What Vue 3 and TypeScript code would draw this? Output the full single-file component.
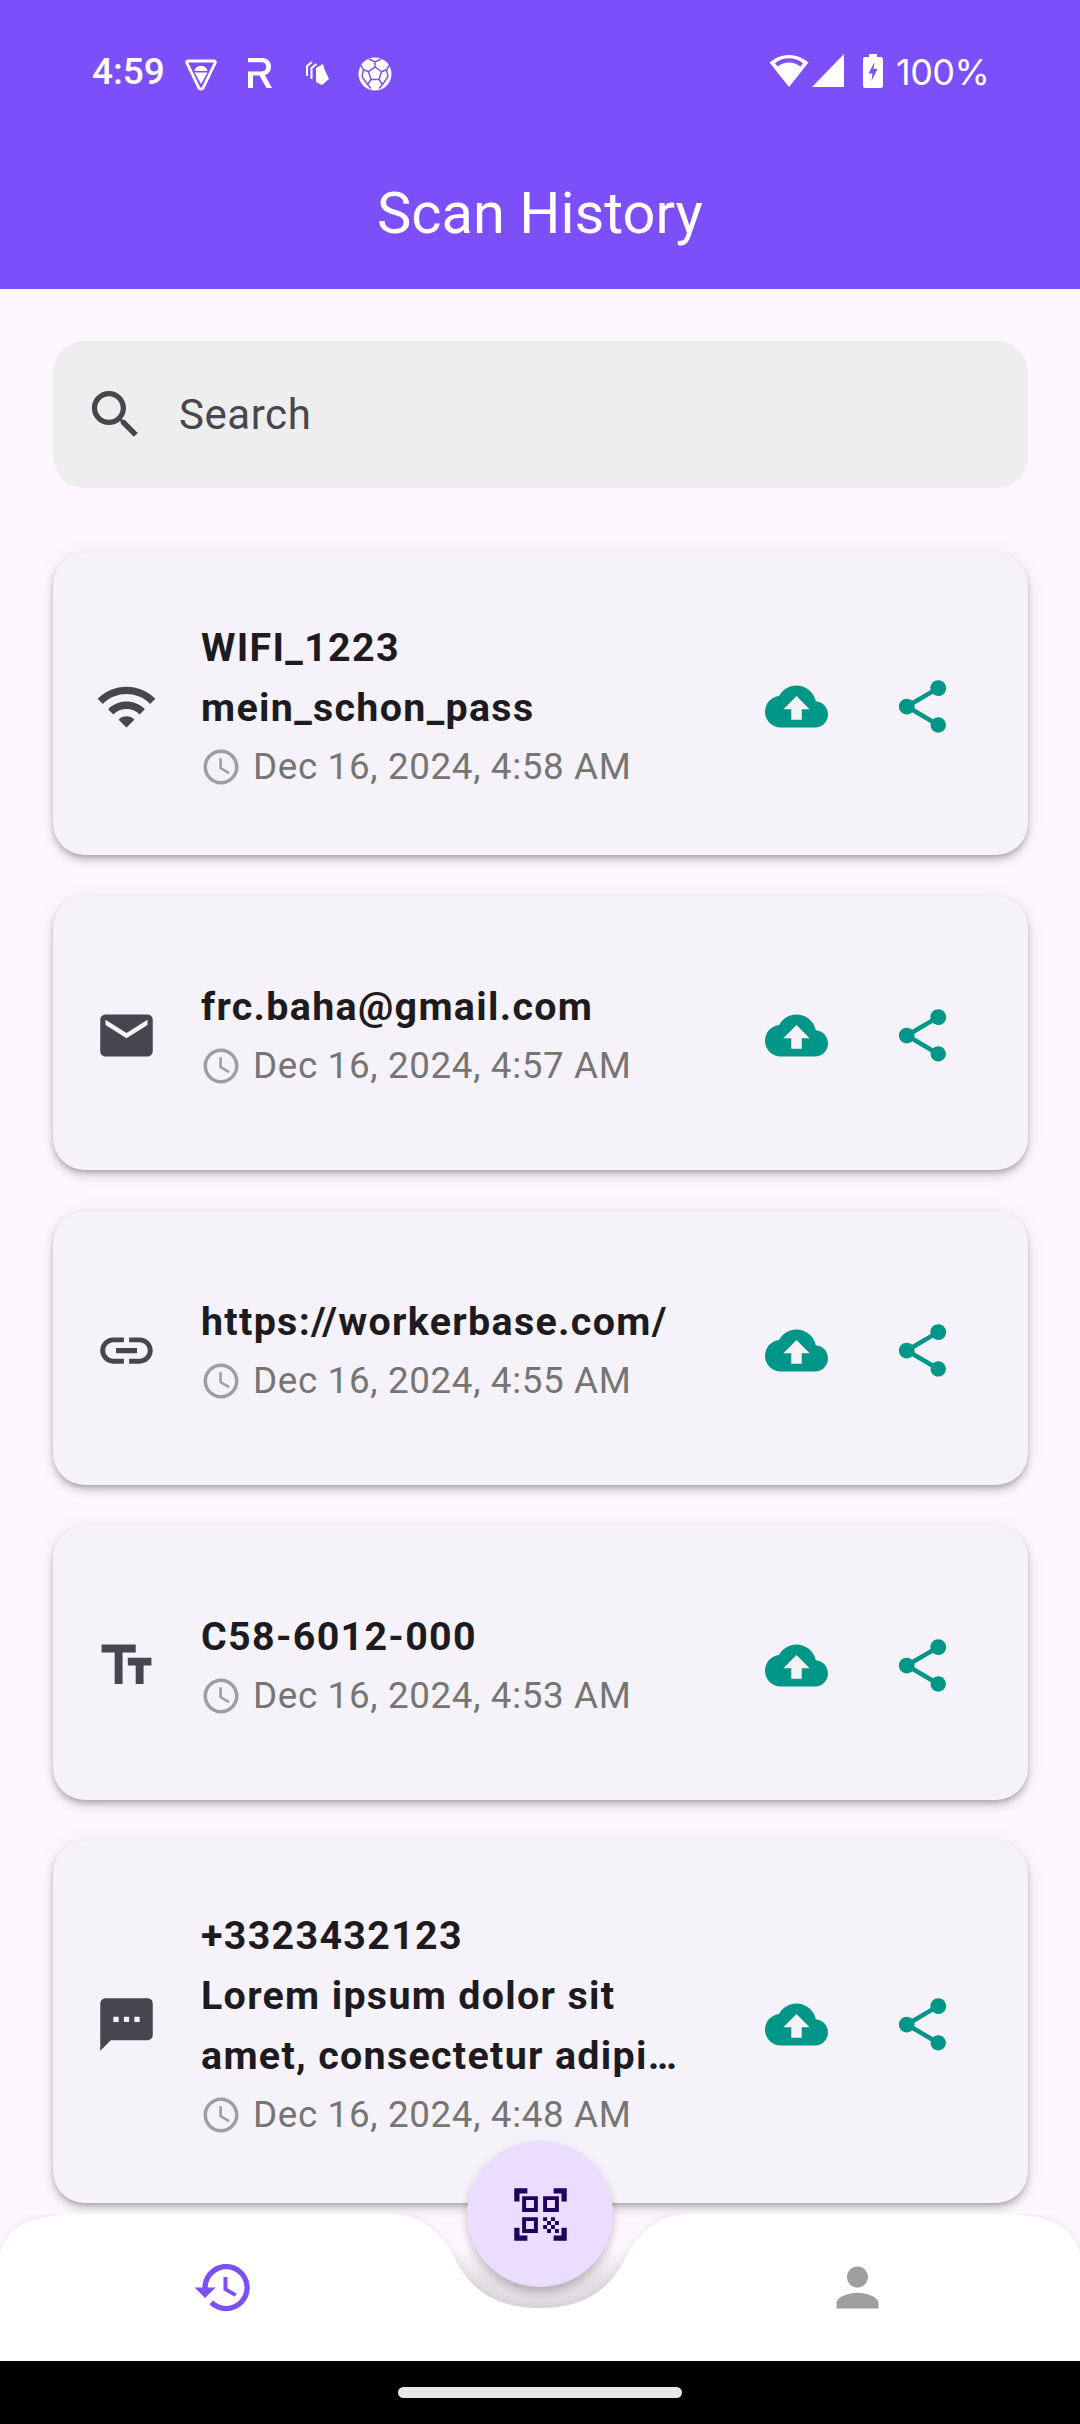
<template>
  <div class="screen">
    <header class="top">
      <div class="status">
        <span class="clock">4:59</span>
        <svg class="st st-vpn" width="32" height="32" viewBox="0 0 32 32">
          <path d="M3 2h26c1 0 1.600.9 1.200 1.800L18 29c-.8 1.400-3.200 1.400-4 0L1.800 3.800C1.400 2.900 2 2 3 2z" fill="none" stroke="#fff" stroke-width="2.800" />
          <path d="M9.500 12c.4-3 3-5 6.500-5s6.100 2 6.500 5zM9.500 13.500h13L16 25z" fill="#fff" />
        </svg>
        <svg class="st st-r" width="24" height="30" viewBox="0 0 24 30">
          <path d="M0 0h14c5.500 0 9 3.500 9 8.700 0 4.200-2.500 7.300-6.200 8.300L24 30h-5.500l-7-12.500H5V30H0V13.500h13.500c3 0 4.700-1.900 4.700-4.700S16.500 4.300 13.500 4.300H0z" fill="#fff" />
        </svg>
        <svg class="st st-stack" width="24" height="26" viewBox="0 0 24 26">
          <path d="M1 16V6l5-4M5.500 19V8l5-4" fill="none" stroke="#fff" stroke-width="2" />
          <path d="M10 8l7-4 1.500 5.500L23 19l-7 6-6-3z" fill="#fff" />
        </svg>
        <svg class="st st-ball" width="34" height="34" viewBox="0 0 34 34">
          <circle cx="17" cy="17" r="16.500" fill="#fff" />
          <path d="M17 10l6.500 4.700-2.500 7.800h-8l-2.500-7.800zM17 10V5M23.500 14.700l5-2M21 22.500l3.500 5M13 22.500l-3.500 5M10.500 14.700l-5-2M11 2l6 3 6-3M28.500 12.700L32 7.500M28.500 12.700l1.500 7-5.500 7.800-3.500 4M5.500 12.700L2 7.500M5.500 12.700L4 19.700l5.500 7.800 3.500 4" fill="none" stroke="#7c4ff8" stroke-width="1.500" />
        </svg>
        <span class="status-gap"></span>
        <svg class="st" width="40" height="33" viewBox="0 0 40 33">
          <path d="M20 1C12.500 1 6 3.800 .5 8.600L20 33 39.500 8.600C34 3.800 27.500 1 20 1z" fill="#fff" />
          <path d="M6 9.200C10 6 15 4.200 20 4.200s10 1.800 14 5l-2.600 3.200C28 9.800 24 8.400 20 8.400s-8 1.400-11.400 4z" fill="#7c4ff8" />
        </svg>
        <svg class="st st-signal" width="32" height="33" viewBox="0 0 32 33">
          <path d="M32 0v33H0z" fill="#fff" />
        </svg>
        <svg class="st st-batt" width="20" height="34" viewBox="0 0 20 34">
          <path d="M6 0h8v3h4c1.100 0 2 .9 2 2v27c0 1.100-.9 2-2 2H2c-1.100 0-2-.9-2-2V5c0-1.100.9-2 2-2h4z" fill="#fff" />
          <path d="M11.500 8L5.500 19.500h4L8.500 27l6-12h-4z" fill="#7c4ff8" />
        </svg>
        <span class="pct">100%</span>
      </div>
      <h1 class="title">Scan History</h1>
    </header>

    <div class="search">
      <svg class="ico" viewBox="0 0 24 24"><path :d="icons.search" /></svg>
      <span class="search-text">Search</span>
    </div>

    <main class="list">
      <article v-for="item in items" :key="item.date" class="card">
        <svg class="ico" viewBox="0 0 24 24"><path :d="icons[item.icon]" /></svg>
        <div class="body">
          <div v-for="line in item.lines" :key="line" class="line">{{ line }}</div>
          <div class="date">
            <svg class="clock-ico" viewBox="0 0 24 24"><path :d="icons.time" /></svg>
            <span>{{ item.date }}</span>
          </div>
        </div>
        <div class="actions">
          <span class="act"><svg class="ico teal" viewBox="0 0 24 24"><path :d="icons.upload" /></svg></span>
          <span class="act"><svg class="ico teal" viewBox="0 0 24 24"><path :d="icons.share" /></svg></span>
        </div>
      </article>
    </main>

    <nav class="nav">
      <svg class="nav-bg" width="1080" height="147" viewBox="0 0 1080 147">
        <defs>
          <linearGradient id="notch" x1="0" y1="0" x2="0" y2="1">
            <stop offset="0.35" stop-color="#000" stop-opacity="0" />
            <stop offset="0.72" stop-color="#000" stop-opacity="0.1" />
            <stop offset="1" stop-color="#000" stop-opacity="0.115" />
          </linearGradient>
        </defs>
        <rect x="380" y="0" width="320" height="96" fill="url(#notch)" />
        <path class="nav-shape" d="M0 147V48Q0 0 80 0H392C425 0 445 25 455 45C470 75 495 94 540 94C585 94 610 75 625 45C635 25 655 0 688 0H1000Q1080 0 1080 48V147Z" fill="#fff" />
      </svg>
      <span class="tab"><svg class="ico purple" viewBox="0 0 24 24"><path :d="icons.history" /></svg></span>
      <span class="tab-mid"></span>
      <span class="tab"><svg class="ico grey" viewBox="0 0 24 24"><path :d="icons.person" /></svg></span>
      <button class="fab">
        <svg class="ico qr" viewBox="0 0 24 24"><path :d="icons.qr" /></svg>
      </button>
    </nav>

    <div class="sysbar"><span class="pill"></span></div>
  </div>
</template>

<script setup lang="ts">
const icons: Record<string, string> = {
  search: 'M15.5 14h-.79l-.28-.27C15.41 12.59 16 11.11 16 9.5 16 5.91 13.09 3 9.5 3S3 5.91 3 9.5 5.91 16 9.5 16c1.61 0 3.09-.59 4.23-1.57l.27.28v.79l5 4.99L20.49 19l-4.99-5zm-6 0C7.01 14 5 11.99 5 9.5S7.01 5 9.5 5 14 7.01 14 9.500 11.99 14 9.500 14z',
  wifi: 'M1 9l2 2c4.97-4.97 13.03-4.97 18 0l2-2C16.93 2.93 7.08 2.93 1 9zm8 8l3 3 3-3c-1.65-1.66-4.34-1.66-6 0zm-4-4l2 2c2.76-2.76 7.24-2.76 10 0l2-2C15.14 9.14 8.87 9.14 5 13z',
  email: 'M20 4H4c-1.1 0-1.99.9-1.99 2L2 18c0 1.1.9 2 2 2h16c1.1 0 2-.9 2-2V6c0-1.1-.9-2-2-2zm0 4l-8 5-8-5V6l8 5 8-5v2z',
  link: 'M3.9 12c0-1.71 1.39-3.1 3.1-3.1h4V7H7c-2.76 0-5 2.24-5 5s2.24 5 5 5h4v-1.9H7c-1.71 0-3.1-1.39-3.1-3.1zM8 13h8v-2H8v2zm9-6h-4v1.9h4c1.71 0 3.1 1.39 3.1 3.1s-1.39 3.1-3.1 3.1h-4V17h4c2.76 0 5-2.24 5-5s-2.24-5-5-5z',
  text: 'M2.5 4v3h5v12h3V7h5V4h-13zm19 5h-9v3h3v7h3v-7h3V9z',
  sms: 'M20 2H4c-1.1 0-1.99.9-1.99 2L2 22l4-4h14c1.1 0 2-.9 2-2V4c0-1.1-.9-2-2-2zM9 11H7V9h2v2zm4 0h-2V9h2v2zm4 0h-2V9h2v2z',
  upload: 'M19.35 10.04C18.67 6.59 15.64 4 12 4 9.11 4 6.6 5.64 5.35 8.04 2.34 8.36 0 10.91 0 14c0 3.31 2.69 6 6 6h13c2.76 0 5-2.24 5-5 0-2.64-2.05-4.78-4.65-4.96zM14 13v4h-4v-4H7l5-5 5 5h-3z',
  share: 'M18 16.08c-.76 0-1.44.3-1.96.77L8.91 12.7c.05-.23.09-.46.09-.7s-.04-.47-.09-.7l7.05-4.11c.54.5 1.25.81 2.04.81 1.66 0 3-1.34 3-3s-1.34-3-3-3-3 1.34-3 3c0 .24.04.47.09.7L8.04 9.81C7.5 9.31 6.79 9 6 9c-1.66 0-3 1.34-3 3s1.34 3 3 3c.79 0 1.5-.31 2.04-.81l7.12 4.16c-.05.21-.08.43-.08.65 0 1.61 1.31 2.92 2.92 2.92 1.61 0 2.92-1.31 2.92-2.92s-1.31-2.92-2.92-2.92z',
  time: 'M11.99 2C6.47 2 2 6.48 2 12s4.47 10 9.99 10C17.52 22 22 17.52 22 12S17.52 2 11.99 2zM12 20c-4.42 0-8-3.58-8-8s3.58-8 8-8 8 3.58 8 8-3.58 8-8 8zm.5-13H11v6l5.25 3.15.75-1.23-4.5-2.67z',
  history: 'M13 3c-4.97 0-9 4.03-9 9H1l3.89 3.89.07.14L9 12H6c0-3.87 3.13-7 7-7s7 3.13 7 7-3.13 7-7 7c-1.93 0-3.68-.79-4.94-2.06l-1.42 1.42C8.27 19.99 10.51 21 13 21c4.97 0 9-4.03 9-9s-4.03-9-9-9zm-1 5v5l4.28 2.54.72-1.21-3.5-2.08V8H12z',
  person: 'M12 12c2.21 0 4-1.79 4-4s-1.79-4-4-4-4 1.79-4 4 1.79 4 4 4zm0 2c-2.67 0-8 1.34-8 4v2h16v-2c0-2.66-5.33-4-8-4z',
  qr: 'M9.5 6.5v3h-3v-3h3M11 5H5v6h6V5zm-1.5 9.5v3h-3v-3h3M11 13H5v6h6v-6zm6.5-6.5v3h-3v-3h3M19 5h-6v6h6V5zm-6 8h1.5v1.5H13V13zm1.5 1.5H16V16h-1.5v-1.5zM16 13h1.5v1.5H16V13zm-3 3h1.5v1.5H13V16zm1.5 1.5H16V19h-1.5v-1.5zM16 16h1.5v1.5H16V16zm1.5-1.5H19V16h-1.5v-1.5zm0 3H19V19h-1.5v-1.5zM22 7h-2V4h-3V2h5v5zm0 15v-5h-2v3h-3v2h5zM2 22h5v-2H4v-3H2v5zM2 2v5h2V4h3V2H2z'
}

const items = [
  { icon: 'wifi', lines: ['WIFI_1223', 'mein_schon_pass'], date: 'Dec 16, 2024, 4:58 AM' },
  { icon: 'email', lines: ['frc.baha@gmail.com'], date: 'Dec 16, 2024, 4:57 AM' },
  { icon: 'link', lines: ['https://workerbase.com/'], date: 'Dec 16, 2024, 4:55 AM' },
  { icon: 'text', lines: ['C58-6012-000'], date: 'Dec 16, 2024, 4:53 AM' },
  { icon: 'sms', lines: ['+3323432123', 'Lorem ipsum dolor sit', 'amet, consectetur adipi…'], date: 'Dec 16, 2024, 4:48 AM' }
]
</script>

<style>
html, body {
  margin: 0;
  background: #000;
}
</style>

<style scoped>
.screen {
  width: 1080px;
  height: 2424px;
  display: flex;
  flex-direction: column;
  overflow: hidden;
  background: #fef7ff;
  font-family: Roboto, "Liberation Sans", sans-serif;
}

.top {
  height: 289px;
  flex: none;
  background: #7c4ff8;
  color: #fff;
}

.status {
  height: 144px;
  box-sizing: border-box;
  padding: 54px 0 0 92px;
  display: flex;
  align-items: flex-start;
}

.clock {
  width: 72px;
  font-size: 37px;
  line-height: 36px;
  font-weight: 500;
  margin-right: 21px;
  white-space: nowrap;
}

.st {
  flex: none;
  display: block;
}

.st-vpn {
  margin: 5px 31px 0 0;
}

.st-r {
  margin: 4px 34px 0 0;
}

.st-stack {
  margin: 6px 28px 0 0;
}

.st-ball {
  margin-top: 3px;
}

.status-gap {
  width: 377px;
  flex: none;
}

.st-signal {
  margin-left: 3px;
}

.st-batt {
  margin-left: 19px;
}

.pct {
  margin-left: 13px;
  font-size: 36px;
  line-height: 36px;
  font-family: Inter, Roboto, sans-serif;
  letter-spacing: -0.5px;
}

.title {
  margin: 0;
  height: 145px;
  line-height: 138px;
  text-align: center;
  font-size: 57.75px;
  font-weight: 400;
}

.search {
  flex: none;
  height: 147px;
  margin: 52px 52.5px 0;
  padding-left: 31.5px;
  display: flex;
  align-items: center;
  background: #eeeeee;
  border-radius: 32px;
}

.search-text {
  margin-left: 32px;
  font-size: 42px;
  font-weight: 450;
  letter-spacing: 0.55px;
  color: #49454f;
}

.ico {
  width: 63px;
  height: 63px;
  flex: none;
  display: block;
  fill: #49454f;
}

.list {
  flex: 1;
  min-height: 0;
  padding: 65px 52.5px 0;
  display: flex;
  flex-direction: column;
  gap: 41px;
}

.card {
  flex: none;
  min-height: 274px;
  box-sizing: border-box;
  padding: 65px 42px 59.4px 42.5px;
  display: flex;
  align-items: center;
  background: #f6f2fa;
  border-radius: 32px;
  box-shadow: 0 3px 5px -1px rgba(0, 0, 0, 0.2), 0 6px 10px 0 rgba(0, 0, 0, 0.14), 0 1px 18px 0 rgba(0, 0, 0, 0.08);
}

.body {
  flex: 1;
  min-width: 0;
  margin-left: 43px;
}

.line {
  height: 60px;
  line-height: 60px;
  font-size: 39.4px;
  font-weight: 700;
  letter-spacing: 1.31px;
  color: #1d1b20;
  white-space: nowrap;
}

.date {
  height: 57.6px;
  display: flex;
  align-items: center;
  font-size: 36.75px;
  letter-spacing: 0.66px;
  color: #757575;
  white-space: nowrap;
}

.clock-ico {
  width: 42px;
  height: 42px;
  flex: none;
  margin: 0 11px 0 -1px;
  fill: #9e9e9e;
}

.actions {
  flex: none;
  display: flex;
}

.act {
  width: 126px;
  height: 126px;
  display: flex;
  align-items: center;
  justify-content: center;
}

.teal {
  fill: #009688;
}

.purple {
  fill: #7c4ff8;
}

.grey {
  fill: #9e9e9e;
}

.qr {
  fill: #21005d;
}

.nav {
  position: relative;
  flex: none;
  height: 147px;
  display: grid;
  grid-template-columns: 446px 188px 446px;
  align-items: center;
  justify-items: center;
}

.nav-bg {
  position: absolute;
  left: 0;
  top: 0;
}

.nav-shape {
  filter: drop-shadow(0 -1px 4px rgba(0, 0, 0, 0.08));
}

.tab {
  position: relative;
}

.fab {
  position: absolute;
  left: 467px;
  top: -73px;
  width: 146px;
  height: 146px;
  padding: 0;
  border: 0;
  border-radius: 50%;
  display: flex;
  align-items: center;
  justify-content: center;
  background: #eaddff;
  box-shadow: 0 5px 10px rgba(0, 0, 0, 0.22);
}

.sysbar {
  flex: none;
  height: 63px;
  display: flex;
  justify-content: center;
  background: #000;
}

.pill {
  width: 284px;
  height: 11px;
  margin-top: 26px;
  border-radius: 6px;
  background: #e8e8e8;
}
</style>
